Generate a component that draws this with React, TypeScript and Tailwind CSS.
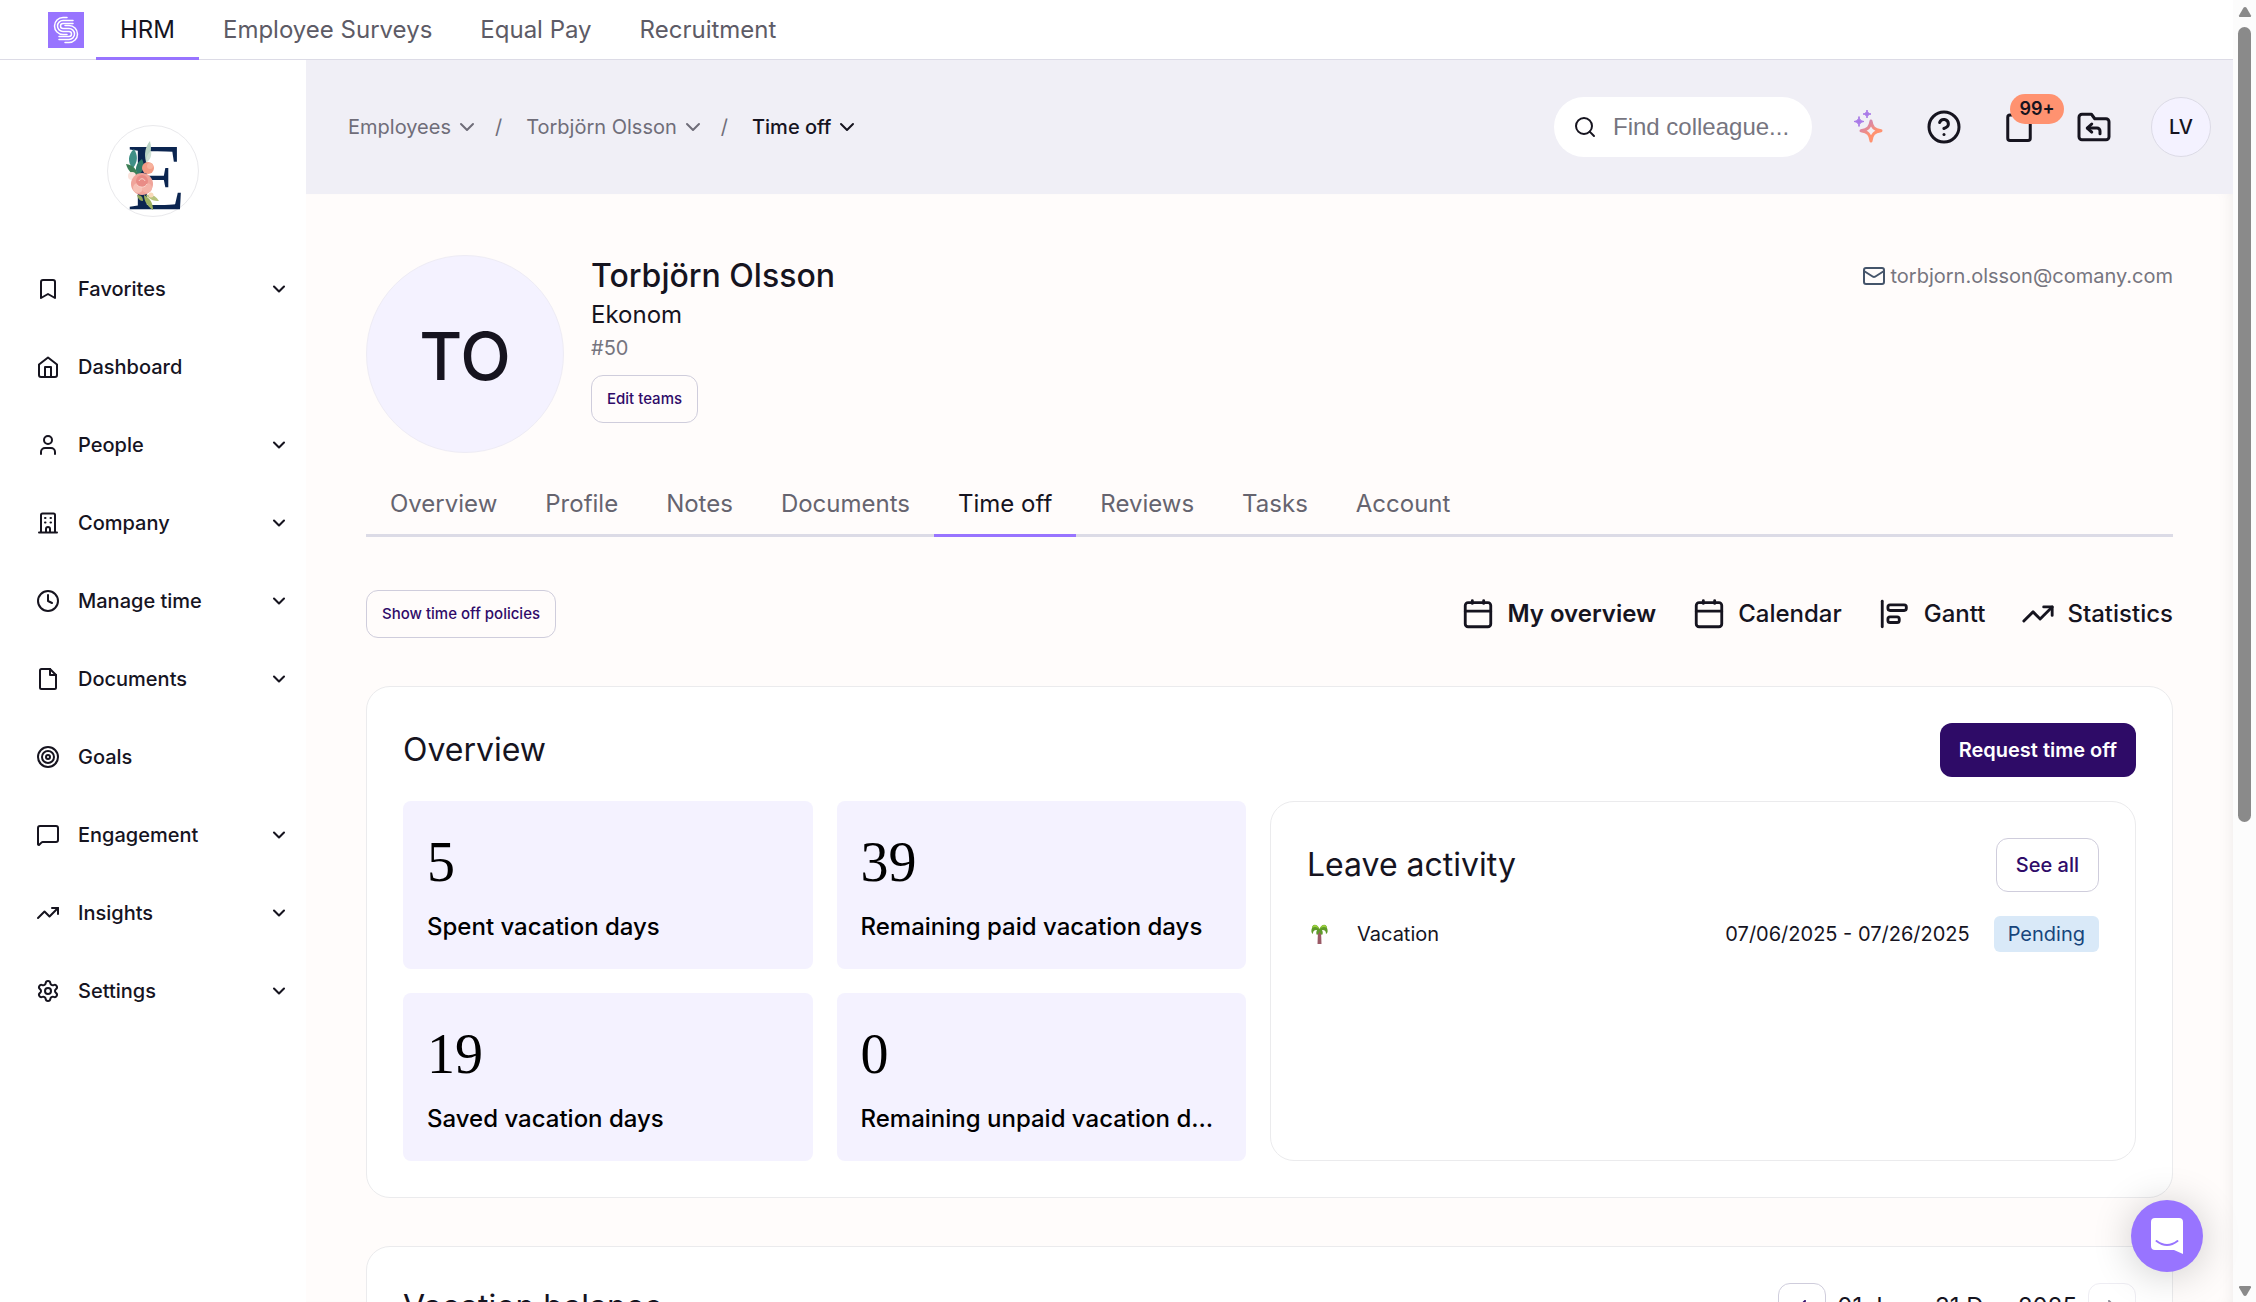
import type { ReactNode } from 'react';
import {
  Bookmark,
  ChevronDown,
  ChevronLeft,
  ChevronRight,
  CircleHelp,
  Clock,
  Mail,
  MessageSquare,
  Search,
  Settings,
  TrendingUp,
  User,
} from 'lucide-react';

const PRODUCTS = ['HRM', 'Employee Surveys', 'Equal Pay', 'Recruitment'];

const TABS = ['Overview', 'Profile', 'Notes', 'Documents', 'Time off', 'Reviews', 'Tasks', 'Account'];

const STATS = [
  { value: '5', label: 'Spent vacation days' },
  { value: '39', label: 'Remaining paid vacation days' },
  { value: '19', label: 'Saved vacation days' },
  { value: '0', label: 'Remaining unpaid vacation days' },
];

function Icon({ children, className = 'size-6' }: { children: ReactNode; className?: string }) {
  return (
    <svg
      viewBox="0 0 24 24"
      fill="none"
      stroke="currentColor"
      strokeWidth="2"
      strokeLinecap="round"
      strokeLinejoin="round"
      className={className}
      aria-hidden
    >
      {children}
    </svg>
  );
}

const HomeIcon = () => (
  <Icon>
    <path d="M3 9.5 12 2.5l9 7V20a2 2 0 0 1-2 2H5a2 2 0 0 1-2-2z" />
    <path d="M9 22V12h6v10" />
  </Icon>
);

const CompanyIcon = () => (
  <Icon>
    <path d="M5 21V4a1.5 1.5 0 0 1 1.5-1.5h11A1.5 1.5 0 0 1 19 4v17" />
    <path d="M3 21.5h18" />
    <path d="M10 21v-3a2 2 0 0 1 4 0v3" />
    <path d="M9 7h.5M14.500 7h.5M9 11.500h.5M14.500 11.500h.5" />
  </Icon>
);

const DocumentIcon = () => (
  <Icon>
    <path d="M14 2H5.500A1.500 1.500 0 0 0 4 3.500v17A1.500 1.500 0 0 0 5.500 22h13a1.500 1.500 0 0 0 1.500-1.500V8z" />
    <path d="M14 2v6h6" />
  </Icon>
);

const GoalsIcon = () => (
  <Icon>
    <circle cx="12" cy="12" r="10" />
    <circle cx="12" cy="12" r="6" />
    <circle cx="12" cy="12" r="2" />
  </Icon>
);

const GanttIcon = () => (
  <Icon className="size-[34px]">
    <path d="M3 3v18" />
    <rect x="7" y="5.500" width="13" height="4" rx="1.500" />
    <rect x="7" y="14" width="8" height="4" rx="1.500" />
  </Icon>
);

const CalendarIcon = () => (
  <Icon className="size-[34px]">
    <rect x="3" y="4" width="18" height="17" rx="2" />
    <path d="M8 2.500v2M16 2.500v2M3 10h18" />
  </Icon>
);

const FolderReturnIcon = () => (
  <Icon className="size-9">
    <path d="M20 20.500a2 2 0 0 0 2-2V8.500a2 2 0 0 0-2-2h-7.500L10.300 3.500H4a2 2 0 0 0-2 2v13a2 2 0 0 0 2 2z" />
    <path d="m10.500 10-3 2.700 3 2.700" />
    <path d="M7.800 12.700H14a2 2 0 0 1 2 2v1.800" />
  </Icon>
);

const SparkleIcon = () => (
  <svg viewBox="0 0 36 36" className="size-9" fill="none" aria-hidden>
    <defs>
      <linearGradient id="sparkle" x1="4" y1="2" x2="24" y2="34" gradientUnits="userSpaceOnUse">
        <stop offset="0" stopColor="#9874ff" />
        <stop offset="0.750" stopColor="#ff9270" />
      </linearGradient>
    </defs>
    <path
      d="M20 12c1 6.500 3 8.500 10 9.800-7 1.200-9 3.200-10 10.200-1-7-3-9-10-10.200 7-1.300 9-3.300 10-9.800z"
      stroke="url(#sparkle)"
      strokeWidth="3"
      strokeLinejoin="round"
    />
    <path
      d="M16 1c.5 2.700 1.300 3.500 4 4-2.700.5-3.500 1.300-4 4-.5-2.700-1.300-3.500-4-4 2.700-.5 3.500-1.300 4-4zM8 7.500c.6 3.400 1.600 4.400 5 5-3.400.6-4.400 1.600-5 5-.6-3.400-1.600-4.400-5-5 3.400-.6 4.400-1.600 5-5z"
      fill="#a97ae8"
      stroke="#a97ae8"
      strokeLinejoin="round"
    />
  </svg>
);

const BrandMark = () => (
  <svg viewBox="0 0 36 36" className="size-9" fill="none" aria-hidden>
    <rect width="36" height="36" fill="#9874ff" />
    <g stroke="#fff" strokeWidth="1.500" strokeLinecap="round">
      <path d="M19 5.500h-4a8.500 8.500 0 0 0 0 17h4" />
      <path d="M25 8.500H15a5.500 5.500 0 0 0 0 11h6a2.500 2.500 0 0 1 0 5H11" />
      <path d="M25 11.500H15a2.500 2.500 0 0 0 0 5h6a5.500 5.500 0 0 1 0 11H11" />
      <path d="M17 13.500h4a8.500 8.500 0 0 1 0 17h-4" />
    </g>
  </svg>
);

/* Serif initial with a small watercolour bouquet on its stem */
const CompanyLogo = () => (
  <svg viewBox="0 0 92 92" className="size-[92px] overflow-visible" aria-label="Company logo">
    <circle cx="46" cy="46" r="45.500" fill="#fff" stroke="#e9e9ec" />
    <text x="20" y="85" fontSize="96" fill="#0b2550" fontFamily="Liberation Serif, serif">
      E
    </text>
    <path d="M27 24c-6 5-7 14-1 19 5-6 5-13 1-19z" fill="#3f8f86" />
    <path d="M35 34c-6 4-8 11-4 16 6-4 7-10 4-16z" fill="#2f7a68" />
    <path d="M19 39c2 7 6 11 12 12-1-7-5-11-12-12z" fill="#3c7f55" />
    <path d="M43 16c-5 6-6 13-4 21 5-7 6-13 4-21z" fill="#b9d3c4" />
    <path d="M44 26c-4 3-5 7-5 12 4-3 6-7 5-12z" fill="#cfe0d4" />
    <circle cx="41" cy="43" r="6" fill="#f39c85" />
    <circle cx="43" cy="41" r="3" fill="#f7b29d" />
    <circle cx="25" cy="51" r="4" fill="#fbe3dc" />
    <circle cx="35" cy="59" r="11" fill="#f0a49a" />
    <circle cx="31" cy="63" r="5" fill="#f7c1b6" />
    <circle cx="40" cy="63" r="5" fill="#f4b3a8" />
    <circle cx="35" cy="56" r="6" fill="#e98c86" />
    <path d="M32 56c1-3 5-3 6 0M30 60c3 3 8 3 10-1" stroke="#f9d3ca" fill="none" />
    <path d="M37 70c0 6 3 11 9 15 0-7-3-12-9-15z" fill="#9db15f" />
    <path d="M39 70c4 5 8 6 13 6-3-5-7-7-13-6z" fill="#b7c37c" />
    <path d="M30 70c1 4 3 6 6 6 0-4-2-6-6-6z" fill="#8ea45a" />
    <circle cx="44" cy="70" r="2.500" fill="#f8d9b8" />
  </svg>
);

const PalmIcon = () => (
  <svg viewBox="0 0 24 24" className="size-6" aria-hidden>
    <path d="M11 8h3l.5 14h-4z" fill="#9a5a66" />
    <path
      d="M12.500 7C10 1 5 2 5 6c-1 2-1 5 1 6 0-3 1-4 4-4-1 2-1 4 0 5 2-1 2.500-3 2.500-5 0 2 .5 4 2.500 5 1-1 1-3 0-5 3 0 4 1 4 4 2-1 2-4 1-6 0-4-5-5-7.500 1z"
      fill="#5f9a2a"
    />
    <path d="M12.500 7C10 2 6 2 5 6c3-2 5-1 7.500 1 2-2 4.500-3 7.500-1-1-4-5-4-7.500 1z" fill="#9bd13c" />
  </svg>
);

const NAV = [
  { label: 'Favorites', icon: <Bookmark className="size-6" />, expandable: true },
  { label: 'Dashboard', icon: <HomeIcon />, expandable: false },
  { label: 'People', icon: <User className="size-6" />, expandable: true },
  { label: 'Company', icon: <CompanyIcon />, expandable: true },
  { label: 'Manage time', icon: <Clock className="size-6" />, expandable: true },
  { label: 'Documents', icon: <DocumentIcon />, expandable: true },
  { label: 'Goals', icon: <GoalsIcon />, expandable: false },
  { label: 'Engagement', icon: <MessageSquare className="size-6" />, expandable: true },
  { label: 'Insights', icon: <TrendingUp className="size-6" />, expandable: true },
  { label: 'Settings', icon: <Settings className="size-6" />, expandable: true },
];

const VIEWS = [
  { label: 'My overview', icon: <CalendarIcon />, active: true },
  { label: 'Calendar', icon: <CalendarIcon />, active: false },
  { label: 'Gantt', icon: <GanttIcon />, active: false },
  { label: 'Statistics', icon: <TrendingUp className="size-[34px]" />, active: false },
];

function ProductBar() {
  return (
    <header className="flex h-[60px] shrink-0 border-b border-[#dcdbe6] bg-white pl-12">
      <a href="#home" aria-label="Home" className="mr-3 self-center">
        <BrandMark />
      </a>
      <nav className="flex text-2xl">
        {PRODUCTS.map((name, i) => (
          <a
            key={name}
            href="#product"
            className={
              i === 0
                ? '-mb-px flex items-center border-b-3 border-[#9874ff] px-6 pt-[3px] text-[#16141f]'
                : '-mb-px flex items-center border-b-3 border-transparent px-6 pt-[3px] text-[#5d5b66]'
            }
          >
            {name}
          </a>
        ))}
      </nav>
    </header>
  );
}

function Sidebar() {
  return (
    <aside className="flex w-[306px] shrink-0 flex-col bg-white pt-[65px]">
      <div className="mb-[33px] flex justify-center">
        <CompanyLogo />
      </div>
      <nav>
        {NAV.map((item) => (
          <button
            key={item.label}
            type="button"
            className="flex h-[78px] w-full items-center pr-[17px] pl-9 text-left text-xl font-medium"
          >
            {item.icon}
            <span className="ml-[18px] flex-1">{item.label}</span>
            {item.expandable && <ChevronDown className="size-5" strokeWidth={2.5} />}
          </button>
        ))}
      </nav>
    </aside>
  );
}

function PageHeader() {
  return (
    <div className="flex h-[134px] shrink-0 items-center justify-between bg-[#f0eff6] pr-[22px] pl-[42px]">
      <nav aria-label="Breadcrumb" className="flex items-center text-xl text-[#6f6d79]">
        <button type="button" className="flex items-center gap-1">
          Employees <ChevronDown className="size-6" />
        </button>
        <span className="mr-6 ml-4">/</span>
        <button type="button" className="flex items-center gap-1">
          Torbjörn Olsson <ChevronDown className="size-6" />
        </button>
        <span className="mr-6 ml-4">/</span>
        <button type="button" className="flex items-center gap-1 font-medium text-[#16141f]">
          Time off <ChevronDown className="size-6" />
        </button>
      </nav>

      <div className="flex items-center gap-[39px]">
        <label className="flex h-[60px] w-[258px] items-center gap-4 rounded-full bg-white pl-[19px]">
          <Search className="size-6 shrink-0" />
          <input
            type="search"
            aria-label="Find colleague"
            placeholder="Find colleague..."
            className="w-full min-w-0 bg-transparent font-['Liberation_Sans',sans-serif] text-2xl outline-none placeholder:text-[#76757f]"
          />
        </label>
        <button type="button" aria-label="Assistant">
          <SparkleIcon />
        </button>
        <button type="button" aria-label="Help">
          <CircleHelp className="size-9" />
        </button>
        <button type="button" aria-label="Tasks" className="relative">
          <Icon className="size-9">
            <rect x="4.500" y="4" width="15" height="17" rx="1.500" />
          </Icon>
          <span className="absolute -top-[15px] left-[9px] flex h-[30px] w-[54px] items-center justify-center rounded-full bg-[#ff9270] text-lg font-semibold">
            99+
          </span>
        </button>
        <button type="button" aria-label="Switch folder">
          <FolderReturnIcon />
        </button>
        <button
          type="button"
          className="flex size-[60px] items-center justify-center rounded-full border border-[#dcdbe6] bg-[#f4f2ff] text-xl font-medium"
        >
          LV
        </button>
      </div>
    </div>
  );
}

function EmployeeHeader() {
  return (
    <section className="flex items-start gap-[27px]">
      <div className="flex size-[198px] shrink-0 items-center justify-center rounded-full border border-[#eeecf5] bg-[#f4f2ff] pt-1 text-[66px] font-medium">
        TO
      </div>
      <div className="flex-1">
        <h1 className="text-[32px] leading-[42px] font-medium">Torbjörn Olsson</h1>
        <p className="text-2xl leading-9">Ekonom</p>
        <p className="text-xl leading-[30px] text-[#76757f]">#50</p>
        <button
          type="button"
          className="mt-3 h-12 rounded-xl border border-[#cfcddc] px-[15px] text-[15px] font-medium text-[#2f0b69]"
        >
          Edit teams
        </button>
      </div>
      <a href="mailto:torbjorn.olsson@comany.com" className="mt-[7px] flex items-center gap-1 text-xl text-[#76757f]">
        <Mail className="size-6 text-[#44546a]" />
        torbjorn.olsson@comany.com
      </a>
    </section>
  );
}

function ProfileTabs() {
  return (
    <nav className="mt-[18px] flex h-[66px] border-b-3 border-[#dcdbe6] text-2xl">
      {TABS.map((tab) => (
        <a
          key={tab}
          href="#tab"
          className={
            tab === 'Time off'
              ? '-mb-[3px] flex items-center border-b-3 border-[#9874ff] px-6 pt-[3px] text-[#16141f]'
              : '-mb-[3px] flex items-center border-b-3 border-transparent px-6 pt-[3px] text-[#66646f]'
          }
        >
          {tab}
        </a>
      ))}
    </nav>
  );
}

function LeaveActivity() {
  return (
    <section className="rounded-3xl border border-[#ebebed] p-9">
      <div className="flex items-center justify-between">
        <h2 className="text-[32px] leading-[42px]">Leave activity</h2>
        <button
          type="button"
          className="h-[54px] rounded-xl border border-[#cfcddc] px-[19px] text-xl font-medium text-[#2f0b69]"
        >
          See all
        </button>
      </div>
      <div className="mt-6 flex h-9 items-center text-xl">
        <PalmIcon />
        <span className="ml-[26px] flex-1">Vacation</span>
        <span>07/06/2025 - 07/26/2025</span>
        <span className="ml-6 flex h-9 items-center rounded-md bg-[#d9e9f8] px-[14px] text-[#17457c]">Pending</span>
      </div>
    </section>
  );
}

function OverviewCard() {
  return (
    <section className="mt-12 rounded-3xl border border-[#ebebed] bg-white p-9">
      <div className="flex items-center justify-between">
        <h2 className="text-[32px] leading-[42px]">Overview</h2>
        <button type="button" className="h-[54px] rounded-xl bg-[#2e0b67] px-[19px] text-xl font-semibold text-white">
          Request time off
        </button>
      </div>
      <div className="mt-6 grid grid-cols-[843fr_866fr] gap-6">
        <div className="grid grid-cols-2 content-start gap-6">
          {STATS.map((stat) => (
            <div key={stat.label} className="h-[168px] min-w-0 rounded-lg bg-[#f4f2ff] p-6 text-black">
              <p className="font-['Liberation_Serif',serif] text-[56px] leading-[74px]">{stat.value}</p>
              <p className="mt-[10px] truncate text-2xl leading-9 font-medium">{stat.label}</p>
            </div>
          ))}
        </div>
        <LeaveActivity />
      </div>
    </section>
  );
}

function BalanceCard() {
  return (
    <section className="mt-12 rounded-3xl border border-[#ebebed] bg-white p-9">
      <div className="flex items-center justify-between">
        <h2 className="text-[32px] leading-[42px]">Vacation balance</h2>
        <div className="flex items-center gap-[11px] text-2xl">
          <button
            type="button"
            aria-label="Previous year"
            className="flex size-12 items-center justify-center rounded-xl border border-[#cfcddc] text-[#2f0b69]"
          >
            <ChevronLeft className="size-6" />
          </button>
          <span>01 Jan - 31 Dec 2025</span>
          <button
            type="button"
            aria-label="Next year"
            className="flex size-12 items-center justify-center rounded-xl border border-[#eeedf3] text-[#8a8894]"
          >
            <ChevronRight className="size-6" />
          </button>
        </div>
      </div>
    </section>
  );
}

function Scrollbar() {
  return (
    <div className="flex w-[23px] shrink-0 flex-col items-center bg-[#fcfcfc] text-[#8a8a8a]" aria-hidden>
      <svg viewBox="0 0 14 12" className="mt-[6px] h-3 w-[14px]" fill="currentColor">
        <path d="M7 1q1 0 1.500.8L13 9.500q.5 1.500-1 1.500H2q-1.500 0-1-1.500L5.500 1.800Q6 1 7 1z" />
      </svg>
      <div className="mt-[9px] h-[795px] w-[13px] rounded-full bg-[#8a8a8a]" />
      <svg viewBox="0 0 14 12" className="mt-auto mb-[5px] h-3 w-[14px]" fill="currentColor">
        <path d="M7 11q1 0 1.500-.8L13 2.500Q13.500 1 12 1H2Q.5 1 1 2.500l4.500 7.700Q6 11 7 11z" />
      </svg>
    </div>
  );
}

function ChatLauncher() {
  return (
    <button
      type="button"
      aria-label="Open chat"
      className="absolute right-[53px] bottom-[30px] flex size-[72px] items-center justify-center rounded-full bg-[#9874ff] shadow-[0_3px_40px_rgba(0,0,0,0.2)]"
    >
      <svg viewBox="0 0 32 36" className="h-9 w-8" aria-hidden>
        <path d="M4 0h24q4 0 4 4v32l-9-4H4q-4 0-4-4V4q0-4 4-4z" fill="#fff" />
        <path d="M5.500 23q10.500 8 21 0" fill="none" stroke="#9874ff" strokeWidth="2" strokeLinecap="round" />
      </svg>
    </button>
  );
}

export default function App() {
  return (
    <div className="relative flex h-screen overflow-hidden bg-white font-['Inter',sans-serif] text-[#16141f]">
      <div className="flex min-w-0 flex-1 flex-col">
        <ProductBar />
        <div className="flex min-h-0 flex-1">
          <Sidebar />
          <div className="flex min-w-0 flex-1 flex-col">
            <PageHeader />
            <main className="min-h-0 flex-1 overflow-hidden bg-[#fffcfb] px-[60px] pt-[61px] shadow-[inset_-12px_0_16px_-12px_rgba(0,0,0,0.08)]">
              <EmployeeHeader />
              <ProfileTabs />
              <div className="mt-[53px] flex items-center justify-between">
                <button
                  type="button"
                  className="h-12 rounded-xl border border-[#cfcddc] px-[15px] text-[15px] font-medium text-[#2f0b69]"
                >
                  Show time off policies
                </button>
                <nav className="flex items-center gap-9 text-2xl">
                  {VIEWS.map((view) => (
                    <a key={view.label} href="#view" className="flex items-center gap-3">
                      {view.icon}
                      <span className={view.active ? 'font-semibold' : 'font-medium'}>{view.label}</span>
                    </a>
                  ))}
                </nav>
              </div>
              <OverviewCard />
              <BalanceCard />
            </main>
          </div>
        </div>
      </div>
      <Scrollbar />
      <ChatLauncher />
    </div>
  );
}
